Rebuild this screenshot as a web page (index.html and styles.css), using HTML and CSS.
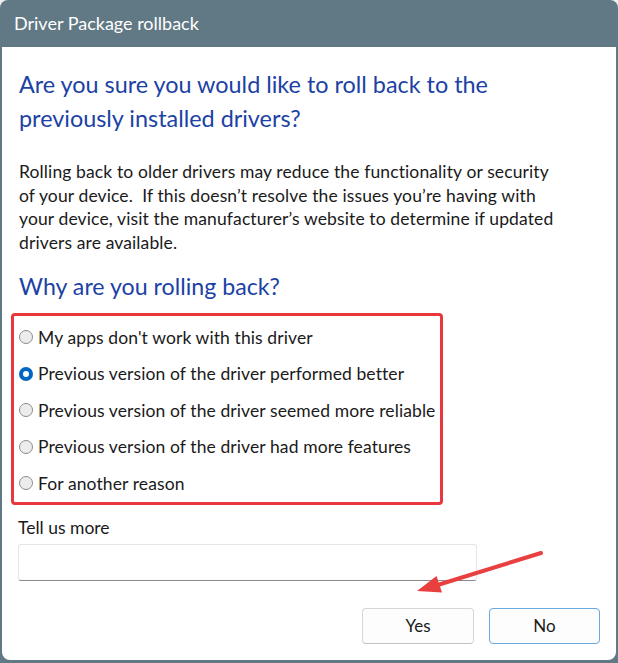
FILE: index.html
```html
<!DOCTYPE html>
<html lang="en">
<head>
  <meta charset="UTF-8">
  <meta name="viewport" content="width=device-width, initial-scale=1.0">
  <title>Driver Package rollback</title>
  <link rel="stylesheet" href="styles.css">
</head>
<body>
  <div class="window">
    <div class="titlebar">Driver Package rollback</div>

    <div class="content">
      <h1 class="question">Are you sure you would like to roll back to the<br>previously installed drivers?</h1>

      <p class="desc">Rolling back to older drivers may reduce the functionality or security<br>of your device.&nbsp; If this doesn’t resolve the issues you’re having with<br>your device, visit the manufacturer’s website to determine if updated<br>drivers are available.</p>

      <h2 class="why">Why are you rolling back?</h2>

      <!-- Reasons (highlighted box) -->
      <div class="reasons">
        <label class="reason"><input type="radio" name="reason"> My apps don't work with this driver</label>
        <label class="reason"><input type="radio" name="reason" checked> Previous version of the driver performed better</label>
        <label class="reason"><input type="radio" name="reason"> Previous version of the driver seemed more reliable</label>
        <label class="reason"><input type="radio" name="reason"> Previous version of the driver had more features</label>
        <label class="reason"><input type="radio" name="reason"> For another reason</label>
      </div>

      <label class="more-label" for="more">Tell us more</label>
      <input class="more-input" id="more" type="text">

      <div class="buttons">
        <button class="btn">Yes</button>
        <button class="btn btn-default">No</button>
      </div>
    </div>

    <!-- annotation arrow -->
    <svg class="arrow" viewBox="0 0 618 663" width="618" height="663">
      <line x1="541" y1="553" x2="436" y2="585.5" stroke="#e8403f" stroke-width="4" stroke-linecap="round"/>
      <polygon points="417,591 442,592.5 436.5,576" fill="#e8403f"/>
    </svg>
  </div>
</body>
</html>
```

FILE: styles.css
```css
body {
  margin: 0;
  background: #f0f0f0;
  font-family: Lato, "Segoe UI", sans-serif;
}
.window {
  position: relative;
  width: 618px;
  height: 663px;
  box-sizing: border-box;
  padding: 0 2px 3px 2px;
  display: flex;
  flex-direction: column;
  background: #617885;
  border-radius: 8px 8px 0 0;
}
.titlebar {
  height: 47px;
  line-height: 46px;
  padding-left: 12px;
  color: #ffffff;
  font-size: 18px;
}
.content {
  flex: 1;
  background: #ffffff;
  border-radius: 0 0 8px 8px;
  padding: 20px 16px 0 16px;
  color: #1a1a1a;
}
.question {
  margin: 0 0 0 1px;
  font-size: 23.4px;
  font-weight: normal;
  line-height: 34px;
  color: #1b42a4;
}
.desc {
  margin: 25px 0 0 1px;
  font-size: 17.5px;
  letter-spacing: 0.12px;
  line-height: 23.5px;
}
.why {
  margin: 17px 0 0 1px;
  font-size: 23.2px;
  font-weight: normal;
  line-height: 30px;
  color: #1b42a4;
}
.reasons {
  margin: 12px 0 0 -7px;
  width: 421px;
  padding: 3px 0 0 5px;
  border: 3px solid #e8383d;
  border-radius: 4px;
}
.reason {
  display: flex;
  align-items: center;
  gap: 5px;
  height: 36.5px;
  font-size: 17.5px;
  letter-spacing: 0.1px;
  white-space: nowrap;
}
.reason input {
  appearance: none;
  margin: 0;
  width: 14px;
  height: 14px;
  border: 1px solid #8c8c8c;
  border-radius: 50%;
  background: #ececec;
  box-sizing: border-box;
}
.reason input:checked {
  border: 4px solid #0067c0;
  background: #ffffff;
}
.more-label {
  display: block;
  margin-top: 12px;
  font-size: 17.5px;
  line-height: 22px;
}
.more-input {
  display: block;
  margin-top: 5px;
  width: 459px;
  height: 37px;
  box-sizing: border-box;
  border: 1px solid #e5e5e5;
  border-bottom-color: #8a8a8a;
  border-radius: 3px;
}
.buttons {
  display: flex;
  justify-content: flex-end;
  gap: 15px;
  margin-top: 27px;
}
.btn {
  width: 112px;
  height: 36px;
  font-family: inherit;
  font-size: 17px;
  color: #1a1a1a;
  background: #fdfdfd;
  border: 1px solid #d6d6d6;
  border-bottom-color: #c4c4c4;
  border-radius: 4px;
}
.btn-default {
  width: 111px;
  border-color: #6aa8e2;
}
.arrow {
  position: absolute;
  left: 0;
  top: 0;
  pointer-events: none;
}
```
